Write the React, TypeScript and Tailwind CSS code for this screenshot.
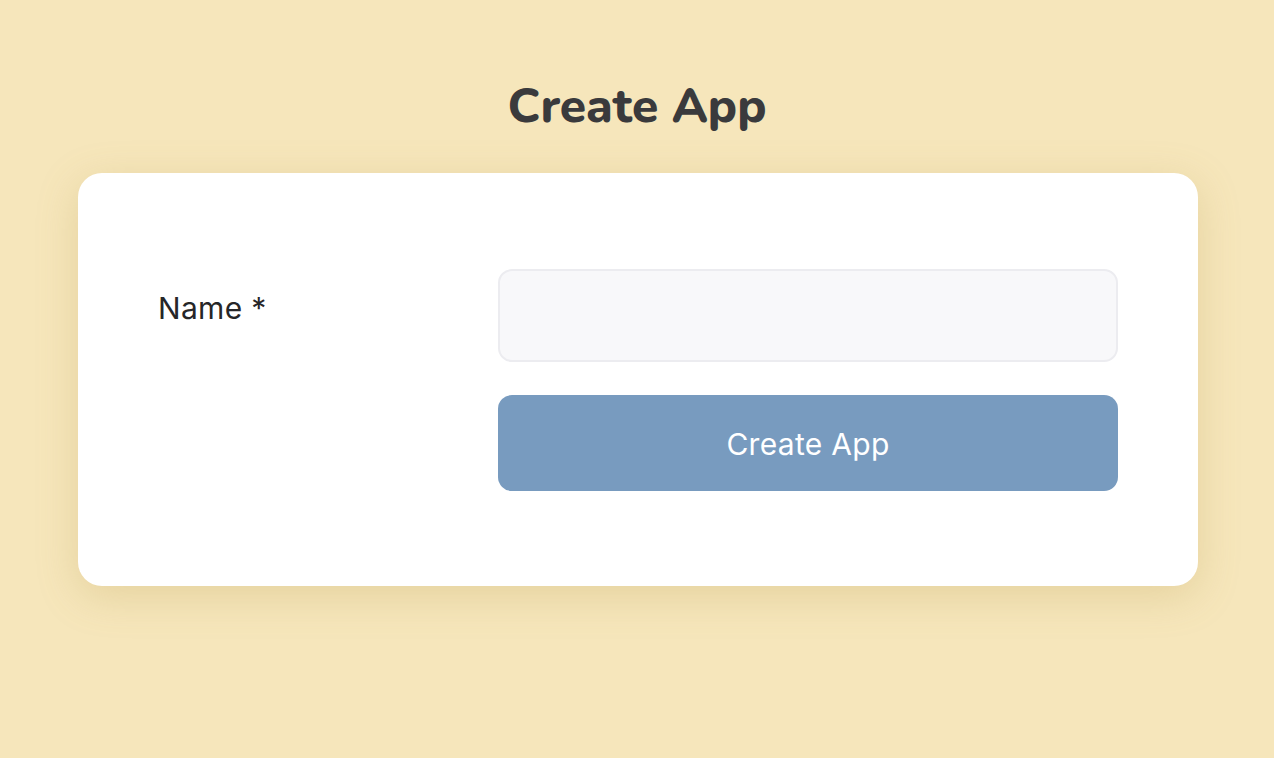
export default function App() {
  return (
    <div className="min-h-[758px] w-full bg-[#f6e6bb] flex flex-col items-center">
      <h1 className="mt-[76px] text-[48px] leading-[60px] font-extrabold text-[#3a3a3c] font-['Nunito','Lato','Noto_Sans',sans-serif]">
        Create App
      </h1>
      <div className="mt-[37px] ml-[2px] w-[1120px] h-[413px] bg-white rounded-[24px] shadow-[0_10px_40px_rgba(180,150,70,0.25)] pl-[80px] pr-[80px] pt-[96px] flex">
        <div className="w-[340px] pt-[19px] text-[30px] leading-[40px] tracking-[0.3px] text-[#262628] font-['Inter','Liberation_Sans',sans-serif]">
          Name *
        </div>
        <div className="flex-1 flex flex-col gap-[33px]">
          <input className="h-[93px] w-full rounded-[14px] bg-[#f8f8fa] border-2 border-[#ececf0] outline-none" />
          <button className="h-[96px] w-full rounded-[14px] bg-[#789bbf] pt-[3px] text-white text-[30px] tracking-[0.3px] font-['Inter','Liberation_Sans',sans-serif]">
            Create App
          </button>
        </div>
      </div>
    </div>
  );
}
